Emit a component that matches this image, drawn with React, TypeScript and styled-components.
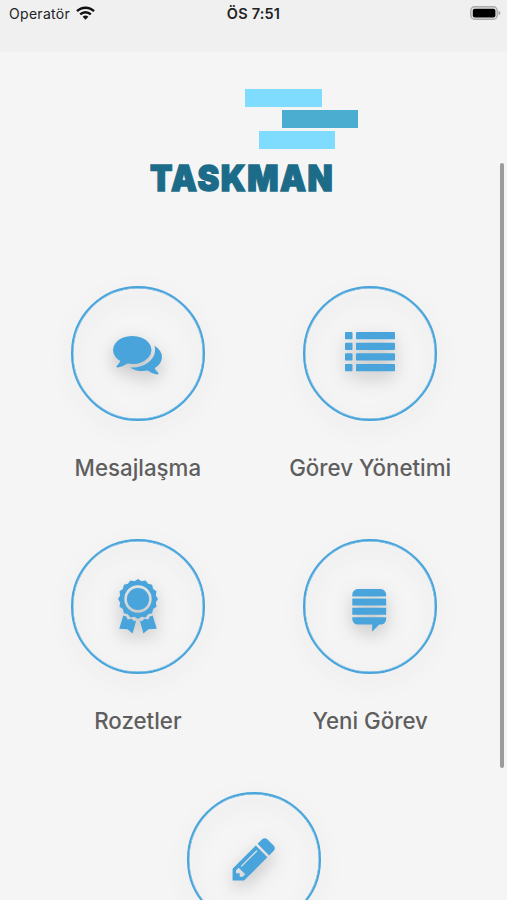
import React from "react";
import styled, { createGlobalStyle } from "styled-components";

const Global = createGlobalStyle`
  * { box-sizing: border-box; }
  html, body { margin: 0; background: #f5f5f5; overflow: hidden; }
`;

const Screen = styled.div`
  position: relative;
  width: 507px;
  height: 900px;
  overflow: hidden;
  background: #f5f5f5;
  font-family: Inter, "Liberation Sans", sans-serif;
`;

const StatusBar = styled.header`
  display: grid;
  grid-template-columns: 1fr auto 1fr;
  align-items: start;
  height: 52px;
  padding: 5px 6px 0 9px;
  background: #f0f0f0;
  color: #222;
  font-size: 14px;
  line-height: 18px;
`;

const Carrier = styled.div`
  display: flex;
  gap: 6px;
  letter-spacing: 0.3px;
  svg { margin-top: 1px; }
`;

const Clock = styled.div`
  margin-right: 3px;
  font-weight: 600;
  font-size: 14.5px;
  letter-spacing: 0.2px;
`;

const Battery = styled.div`
  display: flex;
  justify-content: flex-end;
  padding-top: 1px;
`;

const Logo = styled.div`
  display: flex;
  flex-direction: column;
  width: 210px;
  height: 112px;
  margin: 36.5px 0 0 149px;
`;

const Bar = styled.div<{ $offset: number; $dark?: boolean }>`
  flex: none;
  width: 76.5px;
  height: 18px;
  margin: 0 0 3.2px ${(p) => p.$offset}px;
  background: ${(p) => (p.$dark ? "#4badd0" : "#7fdcff")};
`;

const Wordmark = styled.div`
  margin-top: 3.5px;
  color: #1c6c89;
  font-size: 35px;
  font-weight: 900;
  line-height: 44px;
  letter-spacing: 1.6px;
  white-space: nowrap;
  -webkit-text-stroke: 1.4px #1c6c89;
  transform: translateX(1px) scaleX(0.935);
  transform-origin: left;
`;

const Menu = styled.main`
  display: flex;
  flex-wrap: wrap;
  justify-content: center;
  width: 465px;
  margin: 85.5px 0 0 21.5px;
`;

const Item = styled.div`
  display: flex;
  flex-direction: column;
  align-items: center;
  width: 232.3px;
  height: 253px;
`;

const Circle = styled.div`
  display: grid;
  place-items: center;
  width: 134.5px;
  height: 134.5px;
  border: 2px solid #48a4db;
  border-radius: 50%;
  box-shadow: inset 0 0 0 0.4px #48a4db;
  color: #48a4db;
  filter: drop-shadow(0 7px 10px rgba(0, 0, 0, 0.15));
`;

const Label = styled.div`
  margin-top: 32.5px;
  color: #5e5e5e;
  font-size: 22.3px;
  font-weight: 530;
  line-height: 30px;
  white-space: nowrap;
`;

const ScrollThumb = styled.div`
  position: absolute;
  top: 163px;
  right: 3px;
  width: 4px;
  height: 605px;
  border-radius: 2px;
  background: #9b9b9b;
`;

const Glyph = styled.svg<{ $x?: number; $y?: number }>`
  display: block;
  overflow: visible;
  fill: currentColor;
  margin: ${(p) => p.$y ?? 0}px 0 0 ${(p) => p.$x ?? 0}px;
  filter: drop-shadow(0 6px 8px rgba(0, 0, 0, 0.08));
`;

const Comments = () => (
  <Glyph width="49" height="49" viewBox="0 0 1792 1792">
    <path d="M1408 768q0 139-94 257t-256.5 186.5-353.5 68.5q-86 0-176-16-124 88-278 128-36 9-86 16h-3q-11 0-20.5-8t-11.5-21q-1-3-1-6.5t.5-6.5 2-6l2.5-5 3.5-5.5 4-5 4.5-5 4-4.5q5-6 23-25t26-29.5 22.5-29 25-38.5 20.5-44q-124-72-195-177t-71-224q0-139 94-257t256.5-186.5 353.5-68.5 353.5 68.5 256.5 186.5 94 257zm384 256q0 120-71 224.5t-195 176.5q10 24 20.5 44t25 38.5 22.5 29 26 29.5 23 25q1 1 4 4.5t4.5 5 4 5 3.5 5.5l2.5 5 2 6 .5 6.5-1 6.5q-3 14-13 22t-22 7q-50-7-86-16-154-40-278-128-90 16-176 16-271 0-472-132 58 4 88 4 161 0 309-45t264-129q125-92 192-212t67-254q0-77-23-152 129 71 204 178t75 230z" />
  </Glyph>
);

const List = () => (
  <Glyph width="50" height="40" viewBox="0 0 50 40" $y={-2.5}>
    {[0, 10.7, 21.3, 32].map((y) => (
      <React.Fragment key={y}>
        <rect x="0" y={y} width="7.5" height="7.3" rx="0.9" />
        <rect x="11" y={y} width="39" height="7.3" rx="0.9" />
      </React.Fragment>
    ))}
  </Glyph>
);

const scallop = Array.from({ length: 32 }, (_, i) => {
  const angle = (i * Math.PI) / 16 - Math.PI / 2;
  const r = i % 2 ? 18.2 : 20;
  return `${(20 + r * Math.cos(angle)).toFixed(2)},${(20 + r * Math.sin(angle)).toFixed(2)}`;
}).join("L");

const Award = () => (
  <Glyph width="40" height="55" viewBox="0 0 40 55">
    <path
      fillRule="evenodd"
      d={`M${scallop}ZM20 6.3a13.7 13.7 0 1 0 0 27.4a13.7 13.7 0 1 0 0-27.4Z`}
    />
    <circle cx="20" cy="20" r="11.1" />
    <path d="M5.3 36.5L8.3 37.5L9.7 40.6L13.3 39.8L16.3 42.3L18.2 41.5L14.6 54.6L9.5 50.2L1.2 49.8Z" />
    <path d="M34.7 36.5L31.7 37.5L30.3 40.6L26.7 39.8L23.7 42.3L21.8 41.5L25.4 54.6L30.5 50.2L38.8 49.8Z" />
  </Glyph>
);

const Stack = () => (
  <Glyph width="49" height="49" viewBox="0 0 1792 1792" $x={-1} $y={2}>
    <path d="M1505 1248v66q0 85-57.5 144.5t-138.5 59.5h-57l-260 269v-269h-529q-81 0-138.5-59.5t-57.5-144.5v-66h1238zm0-340v255h-1238v-255h1238zm0-340v255h-1238v-255h1238zm0-141v66h-1238v-66q0-84 57.5-144t138.5-60h846q81 0 138.5 60t57.5 144z" />
  </Glyph>
);

const Pencil = () => (
  <Glyph width="50" height="50" viewBox="0 0 1792 1792">
    <path d="M491 1536l91-91-235-235-91 91v107h128v128h107zm523-928q0-22-22-22-10 0-17 7l-542 542q-7 7-7 17 0 22 22 22 10 0 17-7l542-542q7-7 7-17zm-54-192l416 416-832 832h-416v-416zm683 96q0 53-37 90l-166 166-416-416 166-165q36-38 90-38 53 0 91 38l235 234q37 39 37 91z" />
  </Glyph>
);

const items = [
  { label: "Mesajlaşma", Icon: Comments },
  { label: "Görev Yönetimi", Icon: List },
  { label: "Rozetler", Icon: Award },
  { label: "Yeni Görev", Icon: Stack },
  { label: "", Icon: Pencil },
];

export default function App() {
  return (
    <Screen>
      <Global />
      <StatusBar>
        <Carrier>
          Operatör
          <svg width="19" height="14" viewBox="0 0 19 14" fill="none" stroke="#111" strokeWidth="2.4">
            <path d="M1 5.2C5.7 0.6 13.3 0.6 18 5.2" />
            <path d="M4.2 8.4C7.2 5.5 11.8 5.5 14.8 8.4" />
            <path d="M9.5 13.7L6.6 10.8Q9.5 8.4 12.4 10.8Z" fill="#111" stroke="none" />
          </svg>
        </Carrier>
        <Clock>ÖS 7:51</Clock>
        <Battery>
          <svg width="31" height="14" viewBox="0 0 31 14">
            <rect x="0.8" y="0.8" width="26.4" height="12.4" rx="3.8" fill="#e4e4e4" stroke="#aaa" strokeWidth="1.4" />
            <rect x="2.8" y="2.7" width="22.6" height="8.8" rx="2" fill="#000" />
            <path d="M28.5 4.7Q30.5 5.3 30.5 7T28.5 9.3Z" fill="#aaa" />
          </svg>
        </Battery>
      </StatusBar>
      <Logo>
        <Bar $offset={96.3} />
        <Bar $offset={132.7} $dark />
        <Bar $offset={109.8} />
        <Wordmark>TASKMAN</Wordmark>
      </Logo>
      <Menu>
        {items.map(({ label, Icon }, i) => (
          <Item key={i}>
            <Circle>
              <Icon />
            </Circle>
            {label && <Label>{label}</Label>}
          </Item>
        ))}
      </Menu>
      <ScrollThumb />
    </Screen>
  );
}
